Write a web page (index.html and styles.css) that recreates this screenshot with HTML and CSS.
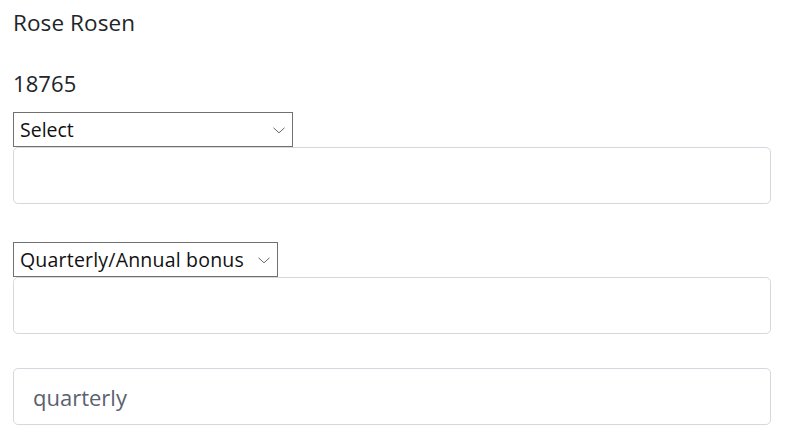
FILE: index.html
```html
<!DOCTYPE html>
<html lang="en">
<head>
    <meta charset="UTF-8">
    <meta name="viewport" content="width=device-width, initial-scale=1.0">
    <title>Employee Bonus</title>
    <link rel="stylesheet" href="styles.css">
</head>
<body>
  <div class="container">
    <p class="info">Rose Rosen</p>
    <p class="info number">18765</p>

    <div class="select-wrap sel-first">
      <select id="type">
        <option>Select</option>
      </select>
      <svg class="chevron" width="12" height="7" viewBox="0 0 12 7"><path d="M0.5 0.8 L6 5.8 L11.5 0.8" fill="none" stroke="#666" stroke-width="1"/></svg>
    </div>
    <input type="text" class="field" id="amount">

    <div class="select-wrap sel-second">
      <select id="period">
        <option>Quarterly/Annual bonus</option>
      </select>
      <svg class="chevron" width="12" height="7" viewBox="0 0 12 7"><path d="M0.5 0.8 L6 5.8 L11.5 0.8" fill="none" stroke="#666" stroke-width="1"/></svg>
    </div>
    <input type="text" class="field" id="bonus">

    <input type="text" class="field last" id="freq" value="quarterly" readonly>
  </div>
</body>
</html>
```

FILE: styles.css
```css
body {
    font-family: "Open Sans", Arial, sans-serif;
    background-color: #fff;
    color: #212529;
    margin: 0;
    padding: 0 15px 0 13px;
}
.container {
    display: flex;
    flex-direction: column;
    align-items: flex-start;
}
.info {
    font-size: 22.5px;
    line-height: 30px;
    margin: 8px 0 0;
    letter-spacing: 0.1px;
}
.number {
    margin-top: 30px;
    font-size: 22px;
}
.select-wrap {
    position: relative;
    margin-top: 14px;
}
.select-wrap select {
    appearance: none;
    -webkit-appearance: none;
    font-family: "Open Sans", Arial, sans-serif;
    font-size: 19.5px;
    color: #111;
    background: #fff;
    border: 1px solid #707070;
    border-radius: 0;
    height: 35px;
    padding: 0 30px 0 6px;
    margin: 0;
    display: block;
}
.sel-first select {
    width: 280px;
}
.sel-second {
    margin-top: 38px;
}
.sel-second select {
    width: 265px;
    letter-spacing: 0.2px;
}
.chevron {
    position: absolute;
    right: 8px;
    top: 15px;
    pointer-events: none;
}
.field {
    box-sizing: border-box;
    width: 100%;
    height: 57px;
    border: 1.5px solid #d3d9df;
    border-radius: 5px;
    padding: 0 19px;
    margin: 0;
    font-family: "Open Sans", Arial, sans-serif;
    font-size: 22px;
    color: #5a6270;
    background: #fff;
}
.last {
    margin-top: 34px;
}
```
